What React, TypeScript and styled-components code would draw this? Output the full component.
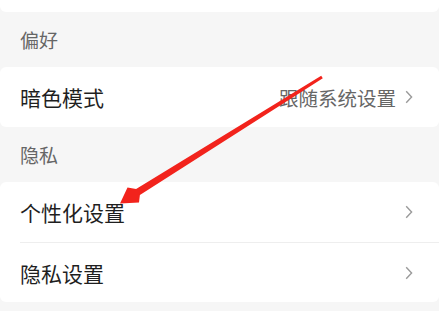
import React from "react";
import styled, { createGlobalStyle } from "styled-components";

interface Item {
  title: string;
  value?: string;
}

interface Section {
  name: string;
  items: Item[];
}

const sections: Section[] = [
  { name: "偏好", items: [{ title: "暗色模式", value: "跟随系统设置" }] },
  { name: "隐私", items: [{ title: "个性化设置" }, { title: "隐私设置" }] },
];

export default function App() {
  return (
    <>
      <GlobalStyle />
      <Page>
        <CardTail />
        {sections.map((section) => (
          <div key={section.name}>
            <SectionHeader>{section.name}</SectionHeader>
            <Card>
              {section.items.map((item, i) => (
                <Row key={item.title} $divider={i > 0}>
                  <RowTitle>{item.title}</RowTitle>
                  <RowRight>
                    {item.value && <RowValue>{item.value}</RowValue>}
                    <Chevron viewBox="0 0 8 14">
                      <path d="M1.2 1.2 L6.6 7 L1.2 12.8" />
                    </Chevron>
                  </RowRight>
                </Row>
              ))}
            </Card>
          </div>
        ))}
        <Arrow viewBox="0 0 439 311">
          <polygon points="321.2,75.7 136.1,189 127.5,187.5 120,203.5 139,202.5 139.9,195 322.8,78.3" />
        </Arrow>
      </Page>
    </>
  );
}

const GlobalStyle = createGlobalStyle`
  html, body {
    margin: 0;
    padding: 0;
    background: #f6f6f6;
  }
  body {
    font-family: "Noto Sans CJK SC", "Noto Sans", sans-serif;
  }
`;

const Page = styled.div`
  position: relative;
  width: 439px;
  height: 311px;
  overflow: hidden;
  background: #f6f6f6;
`;

const CardTail = styled.div`
  height: 12px;
  background: #fff;
  border-radius: 0 0 6px 6px;
`;

const SectionHeader = styled.div`
  height: 55px;
  display: flex;
  align-items: center;
  padding-left: 20px;
  font-size: 19px;
  color: #666;
`;

const Card = styled.div`
  background: #fff;
  border-radius: 6px;
  overflow: hidden;
`;

const Row = styled.div<{ $divider?: boolean }>`
  height: ${(p) => (p.$divider ? "59px" : "60px")};
  display: flex;
  align-items: center;
  justify-content: space-between;
  margin-left: 20px;
  padding-right: 26px;
  border-top: ${(p) => (p.$divider ? "1px solid #eeeeee" : "none")};
`;

const RowTitle = styled.span`
  font-size: 21px;
  color: #1f1f1f;
`;

const RowRight = styled.div`
  display: flex;
  align-items: center;
  gap: 9px;
`;

const RowValue = styled.span`
  font-size: 19.5px;
  color: #666;
`;

const Chevron = styled.svg`
  width: 8px;
  height: 14px;
  fill: none;
  stroke: #9a9a9a;
  stroke-width: 1.4;
`;

const Arrow = styled.svg`
  position: absolute;
  left: 0;
  top: 0;
  width: 439px;
  height: 311px;
  pointer-events: none;

  polygon {
    fill: #f2231c;
  }
`;
